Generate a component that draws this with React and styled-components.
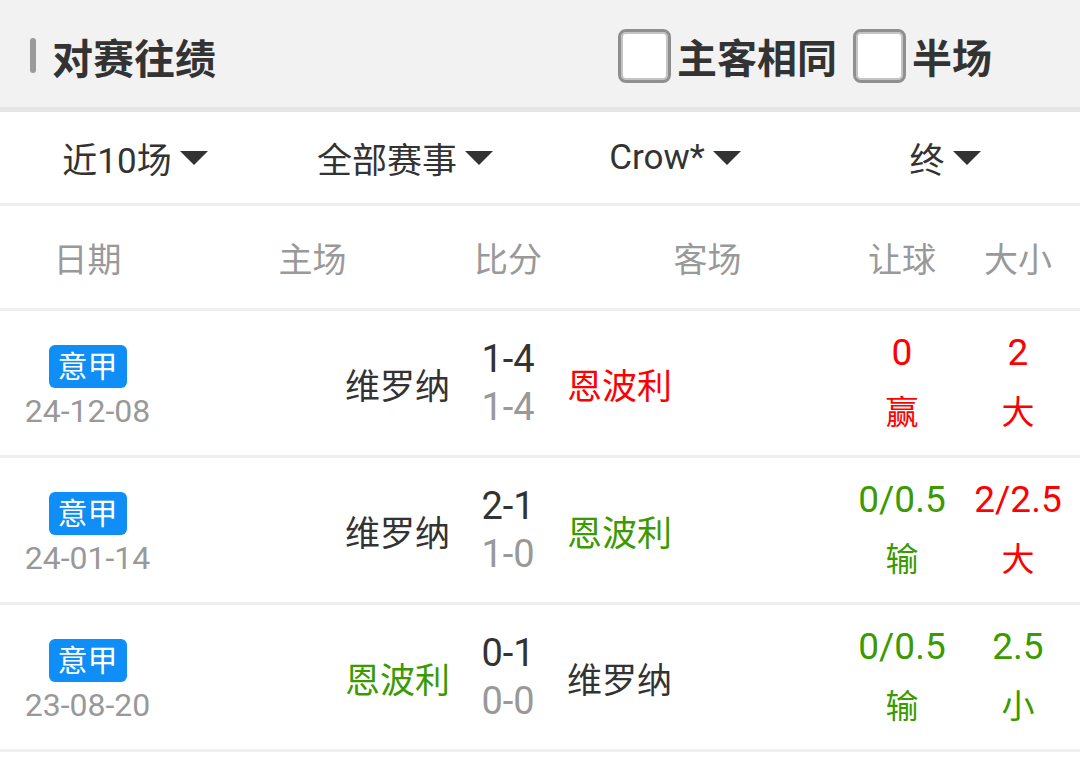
import styled, { createGlobalStyle } from "styled-components"

const GlobalStyle = createGlobalStyle`
  * { box-sizing: border-box; }
  body {
    margin: 0;
    background: #fff;
    font-family: Roboto, "Noto Sans CJK SC", sans-serif;
    color: #333;
  }
`

const RED = "#ff0000"
const GREEN = "#3a9a00"
const DARK = "#333"

const Page = styled.div`
  width: 1080px;
`

const Header = styled.div`
  height: 112px;
  background: #f2f2f2;
  border-bottom: 5px solid #e6e6e6;
  display: flex;
  align-items: center;
  justify-content: space-between;
  padding: 4px 88px 0 30px;
`

const Title = styled.div`
  display: flex;
  align-items: center;
  gap: 16px;
  font-size: 41px;
  font-weight: 700;
  color: #333;
`

const Bar = styled.span`
  width: 6px;
  height: 35px;
  border-radius: 3px;
  background: #9a9a9a;
`

const Options = styled.div`
  display: flex;
  align-items: center;
  gap: 16px;
`

const Option = styled.label`
  display: flex;
  align-items: center;
  gap: 6px;
  font-size: 40px;
  font-weight: 700;
  color: #333;
`

const Box = styled.span`
  width: 53px;
  height: 54px;
  border-radius: 8px;
  background: #fff;
  border: 3px solid #8f8f8f;
  box-shadow: inset 0 0 0 2px #c4c4c4;
`

const Filters = styled.div`
  height: 94px;
  display: grid;
  grid-template-columns: repeat(4, 1fr);
  align-items: center;
  border-bottom: 3px solid #efefef;
`

const Filter = styled.div`
  display: flex;
  align-items: center;
  justify-content: center;
  gap: 8px;
  font-size: 35px;
  color: #333;
`

const Caret = styled.span`
  width: 0;
  height: 0;
  border-left: 14px solid transparent;
  border-right: 14px solid transparent;
  border-top: 14px solid #333;
`

const Grid = styled.div`
  display: grid;
  grid-template-columns: 175px 285px 96px 292px 108px 124px;
  align-items: center;
  border-bottom: 3px solid #efefef;
  height: ${p => p.$h}px;
`

const HeadCell = styled.div`
  text-align: center;
  font-size: 34px;
  color: #999;
  padding: ${p => p.$pad || "0"};
`

const DateCell = styled.div`
  display: flex;
  flex-direction: column;
  align-items: center;
  padding-top: 8px;
`

const Badge = styled.span`
  height: 43px;
  padding: 0 9px;
  border-radius: 6px;
  background: #0e8ef6;
  color: #fff;
  font-size: 30px;
  line-height: 43px;
`

const DateText = styled.span`
  font-size: 32px;
  line-height: 38px;
  margin-top: 4px;
  color: #999;
`

const Team = styled.div`
  font-size: 35px;
  color: ${p => p.$color};
  text-align: ${p => p.$align};
  padding: ${p => (p.$align === "right" ? "0 10px 0 0" : "0 0 0 11px")};
`

const Score = styled.div`
  display: flex;
  flex-direction: column;
  align-items: center;
  font-size: 38px;
  line-height: 48px;
  color: ${DARK};
`

const Half = styled.span`
  color: #999;
`

const Odds = styled.div`
  display: flex;
  flex-direction: column;
  align-items: center;
  line-height: 60px;
  color: ${p => p.$color};
`

const OddsValue = styled.span`
  font-size: 37px;
`

const OddsLabel = styled.span`
  font-size: 33px;
`

const matches = [
  {
    date: "24-12-08", home: "维罗纳", homeColor: DARK, away: "恩波利", awayColor: RED,
    score: "1-4", half: "1-4",
    hcp: "0", hcpText: "赢", hcpColor: RED,
    ou: "2", ouText: "大", ouColor: RED,
  },
  {
    date: "24-01-14", home: "维罗纳", homeColor: DARK, away: "恩波利", awayColor: GREEN,
    score: "2-1", half: "1-0",
    hcp: "0/0.5", hcpText: "输", hcpColor: GREEN,
    ou: "2/2.5", ouText: "大", ouColor: RED,
  },
  {
    date: "23-08-20", home: "恩波利", homeColor: GREEN, away: "维罗纳", awayColor: DARK,
    score: "0-1", half: "0-0",
    hcp: "0/0.5", hcpText: "输", hcpColor: GREEN,
    ou: "2.5", ouText: "小", ouColor: GREEN,
  },
]

const filters = ["近10场", "全部赛事", "Crow*", "终"]

export default function App() {
  return (
    <Page>
      <GlobalStyle />
      <Header>
        <Title>
          <Bar />
          对赛往绩
        </Title>
        <Options>
          <Option><Box />主客相同</Option>
          <Option><Box />半场</Option>
        </Options>
      </Header>

      <Filters>
        {filters.map(f => (
          <Filter key={f}>
            {f}
            <Caret />
          </Filter>
        ))}
      </Filters>

      <Grid $h={105}>
        <HeadCell>日期</HeadCell>
        <HeadCell $pad="0 10px 0 0">主场</HeadCell>
        <HeadCell>比分</HeadCell>
        <HeadCell $pad="0 0 0 11px">客场</HeadCell>
        <HeadCell>让球</HeadCell>
        <HeadCell>大小</HeadCell>
      </Grid>

      {matches.map(m => (
        <Grid $h={147} key={m.date}>
          <DateCell>
            <Badge>意甲</Badge>
            <DateText>{m.date}</DateText>
          </DateCell>
          <Team $align="right" $color={m.homeColor}>{m.home}</Team>
          <Score>
            <span>{m.score}</span>
            <Half>{m.half}</Half>
          </Score>
          <Team $align="left" $color={m.awayColor}>{m.away}</Team>
          <Odds $color={m.hcpColor}>
            <OddsValue>{m.hcp}</OddsValue>
            <OddsLabel>{m.hcpText}</OddsLabel>
          </Odds>
          <Odds $color={m.ouColor}>
            <OddsValue>{m.ou}</OddsValue>
            <OddsLabel>{m.ouText}</OddsLabel>
          </Odds>
        </Grid>
      ))}
    </Page>
  )
}
